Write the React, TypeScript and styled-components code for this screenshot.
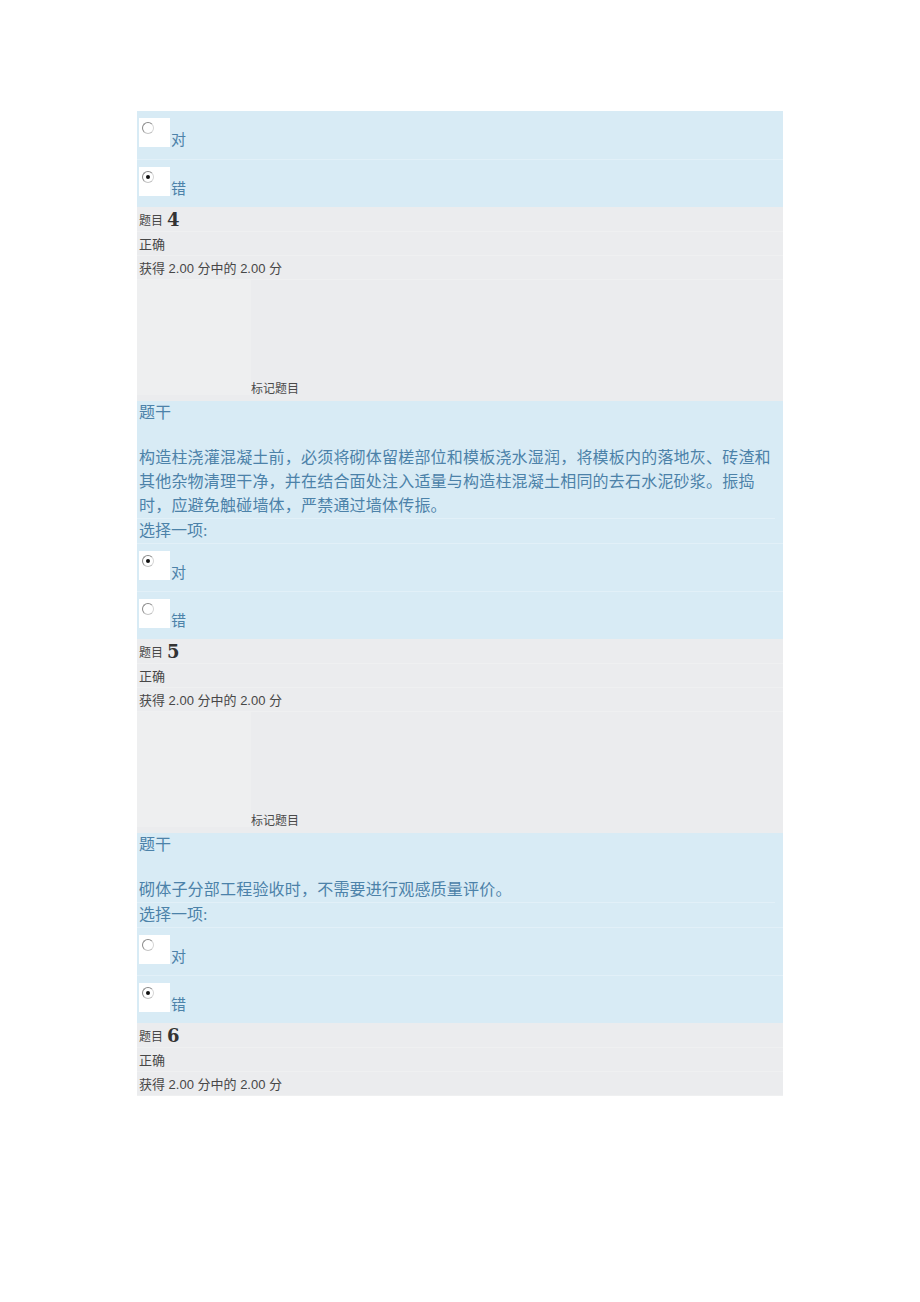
import React from "react";
import styled, {createGlobalStyle} from "styled-components";

const GlobalStyle = createGlobalStyle`
  html, body {
    margin: 0;
    padding: 0;
    background: #fff;
  }
  body {
    font-family: "Liberation Sans", "Noto Sans CJK SC", sans-serif;
  }
`;

const Page = styled.div`
  padding: 111px 0 208px 137px;
`;

const Sheet = styled.div`
  width: 646px;
`;

const BlueBlock = styled.div`
  background: #d8ebf5;
  color: #4c82a9;
  font-family: "Liberation Serif", "Noto Sans CJK SC", serif;
  font-size: 16px;
`;

const GrayBlock = styled.div`
  background: #ebecee;
  color: #474747;
  font-size: 13px;
`;

const OptionRow = styled.div`
  height: 48px;
  box-sizing: border-box;
  padding: 7px 0 0 2px;
  display: flex;
  align-items: flex-start;
  border-top: 1px solid #e2f0f8;
  &:first-child {
    border-top: none;
  }
`;

const RadioBox = styled.div`
  width: 31px;
  height: 29px;
  background: #fff;
  position: relative;
  flex-shrink: 0;
`;

const RadioDot = styled.span<{ $checked: boolean }>`
  position: absolute;
  left: 3px;
  top: 4px;
  width: 12px;
  height: 12px;
  border-radius: 50%;
  box-sizing: border-box;
  border: 1.5px solid #8a8a8a;
  border-right-color: #d6d6d6;
  border-bottom-color: #c4c4c4;
  background: #fff;
  &::after {
    content: '';
    display: ${p => (p.$checked ? "block" : "none")};
    position: absolute;
    left: 2.5px;
    top: 2.5px;
    width: 4px;
    height: 4px;
    border-radius: 50%;
    background: #111;
  }
`;

const OptionLabel = styled.span`
  font-size: 15px;
  line-height: 18px;
  margin-top: 13px;
  padding-left: 1px;
`;

const Line = styled.div<{ $h?: number }>`
  height: ${p => p.$h ?? 24}px;
  box-sizing: border-box;
  padding-left: 2px;
  display: flex;
  align-items: center;
  border-bottom: 1px solid #eff0f1;
`;

const QLabel = styled.span`
  font-size: 12px;
  margin-right: 4px;
`;

const QNumber = styled.span`
  font-family: "DejaVu Serif", "Liberation Serif", serif;
  font-weight: bold;
  font-size: 18px;
  color: #333;
`;

const FlagArea = styled.div`
  height: 121px;
  display: flex;
  align-items: stretch;
`;

const FlagCell = styled.div`
  width: 114px;
  height: 115px;
  background: #eeeff0;
`;

const FlagText = styled.span`
  align-self: flex-end;
  font-size: 12px;
  line-height: 14px;
  padding: 0 0 5px 0;
  color: #4a4a4a;
`;

const StemTitle = styled.div`
  height: 23px;
  padding-left: 2px;
  line-height: 23px;
  margin-bottom: 22px;
`;

const StemText = styled.div`
  width: 636px;
  padding-left: 2px;
  line-height: 24px;
  letter-spacing: 0.2px;
  border-bottom: 1px solid #e2f0f8;
`;

const Prompt = styled.div`
  padding-left: 2px;
  line-height: 24px;
`;

interface OptionProps {
    label: string;
    checked: boolean;
}

const Option = ({label, checked}: OptionProps) => (
    <OptionRow>
        <RadioBox><RadioDot $checked={checked}/></RadioBox>
        <OptionLabel>{label}</OptionLabel>
    </OptionRow>
);

const Info = ({n, flag}: { n: number; flag: boolean }) => (
    <GrayBlock>
        <Line $h={25}><QLabel>题目</QLabel><QNumber>{n}</QNumber></Line>
        <Line>正确</Line>
        <Line>获得 2.00 分中的 2.00 分</Line>
        {flag && (
            <FlagArea>
                <FlagCell/>
                <FlagText>标记题目</FlagText>
            </FlagArea>
        )}
    </GrayBlock>
);

const Question = ({text, answer}: { text: string; answer: boolean }) => (
    <BlueBlock>
        <StemTitle>题干</StemTitle>
        <StemText>{text}</StemText>
        <Prompt>选择一项:</Prompt>
        <Option label="对" checked={answer}/>
        <Option label="错" checked={!answer}/>
    </BlueBlock>
);

export default function App() {
    return (
        <>
            <GlobalStyle/>
            <Page>
                <Sheet>
                    <BlueBlock>
                        <Option label="对" checked={false}/>
                        <Option label="错" checked={true}/>
                    </BlueBlock>
                    <Info n={4} flag/>
                    <Question
                        answer={true}
                        text="构造柱浇灌混凝土前，必须将砌体留槎部位和模板浇水湿润，将模板内的落地灰、砖渣和其他杂物清理干净，并在结合面处注入适量与构造柱混凝土相同的去石水泥砂浆。振捣时，应避免触碰墙体，严禁通过墙体传振。"
                    />
                    <Info n={5} flag/>
                    <Question
                        answer={false}
                        text="砌体子分部工程验收时，不需要进行观感质量评价。"
                    />
                    <Info n={6} flag={false}/>
                </Sheet>
            </Page>
        </>
    );
}
